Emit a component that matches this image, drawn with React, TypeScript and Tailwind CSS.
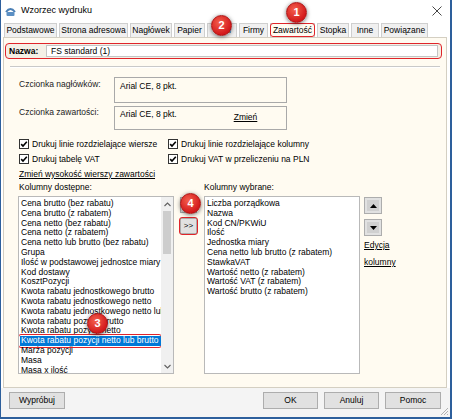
import React from "react";

const tabs: [string, number][] = [
  ["Podstawowe", 53],
  ["Strona adresowa", 69],
  ["Nagłówek", 42],
  ["Papier", 31],
  ["Tytuł", 30],
  ["Firmy", 29],
  ["Zawartość", 45],
  ["Stopka", 32],
  ["Inne", 28],
  ["Powiązane", 47],
];

const available = [
  "Cena brutto (bez rabatu)",
  "Cena brutto (z rabatem)",
  "Cena netto (bez rabatu)",
  "Cena netto (z rabatem)",
  "Cena netto lub brutto (bez rabatu)",
  "Grupa",
  "Ilość w podstawowej jednostce miary",
  "Kod dostawy",
  "KosztPozycji",
  "Kwota rabatu jednostkowego brutto",
  "Kwota rabatu jednostkowego netto",
  "Kwota rabatu jednostkowego netto lub brutto",
  "Kwota rabatu pozycji brutto",
  "Kwota rabatu pozycji netto",
  "Kwota rabatu pozycji netto lub brutto",
  "Marża pozycji",
  "Masa",
  "Masa x ilość",
];

const chosen = [
  "Liczba porządkowa",
  "Nazwa",
  "Kod CN/PKWiU",
  "Ilość",
  "Jednostka miary",
  "Cena netto lub brutto (z rabatem)",
  "StawkaVAT",
  "Wartość netto (z rabatem)",
  "Wartość VAT (z rabatem)",
  "Wartość brutto (z rabatem)",
];

function Badge({ n, className }: { n: number; className: string }) {
  return (
    <div
      className={
        "absolute w-[21px] h-[21px] rounded-full border border-[#a81212] bg-[radial-gradient(circle_at_40%_35%,#f4604e,#d3191b_70%)] shadow-[0_1px_4px_rgba(0,0,0,0.55)] flex items-center justify-center text-white font-bold text-[11px] leading-none " +
        className
      }
    >
      {n}
    </div>
  );
}

function Check() {
  return (
    <svg width="10" height="10" viewBox="0 0 10 10" className="shrink-0">
      <rect x="0.5" y="0.5" width="9" height="9" fill="#fff" stroke="#333" />
      <path d="M2.2 5.1 L4 7 L7.8 2.8" fill="none" stroke="#000" strokeWidth="1.6" />
    </svg>
  );
}

function Btn({ children, w, className = "" }: { children: React.ReactNode; w: string; className?: string }) {
  return (
    <div
      className={
        "h-[17px] bg-[#e1e1e1] border border-[#adadad] flex items-center justify-center text-[8.5px] " +
        w +
        " " +
        className
      }
    >
      {children}
    </div>
  );
}

export default function App() {
  return (
    <div className="relative w-[452px] h-[419px] overflow-hidden bg-white border-l border-r-[2px] border-b-[2px] border-[#2d5f9c] font-['Liberation_Sans',Arial,sans-serif] text-[8.5px] text-black flex flex-col">
      {/* title bar */}
      <div className="h-[22px] shrink-0 flex items-center pl-[4px] pr-[8px]">
        <svg width="11" height="11" viewBox="0 0 11 11">
          <path d="M1 6 Q5.5 0 10 6" fill="none" stroke="#4a7fb5" strokeWidth="2" />
          <rect x="1.5" y="6" width="8" height="4" rx="1" fill="#5b8fc4" />
        </svg>
        <span className="ml-[5px] text-[9px]">Wzorzec wydruku</span>
        <svg width="10" height="10" viewBox="0 0 10 10" className="ml-auto">
          <path d="M0.5 0.5 L9.5 9.5 M9.5 0.5 L0.5 9.5" stroke="#333" strokeWidth="0.9" />
        </svg>
      </div>

      {/* tabs */}
      <div className="h-[15px] shrink-0 flex items-end gap-[2px] pl-[3px]">
        {tabs.map(([t, w]) => (
          <div
            key={t}
            style={{ width: w }}
            className={
              "relative h-[14px] border border-b-0 border-[#cfcfcf] flex items-center justify-center whitespace-nowrap " +
              (t === "Zawartość" ? "bg-[#fffbf1]" : "bg-[#f0f0f0]")
            }
          >
            {t}
            {t === "Zawartość" && (
              <span className="absolute -inset-x-[1px] -top-[1px] bottom-[0px] rounded-[3px] border-[1.5px] border-[#e0242a]" />
            )}
          </div>
        ))}
      </div>

      {/* content panel */}
      <div className="ml-[2px] w-[444px] h-[351px] shrink-0 border border-[#d4cfc2] bg-[#fffbf1] flex flex-col">
        {/* Nazwa */}
        <div className="ml-[1px] mt-[5px] w-[437px] h-[16px] rounded-[4px] border-[1.5px] border-[#e0242a] bg-[#f4f0e6] flex items-center pl-[3px]">
          <span className="font-bold w-[37px]">Nazwa:</span>
          <div className="w-[392px] h-[12px] bg-white border border-[#c4c4c4] flex items-center pl-[4px]">
            FS standard (1)
          </div>
        </div>

        <div className="ml-[6px] mt-[7px] w-[430px] border-t border-[#c9c9c9] border-b border-b-white h-0" />

        {/* fonts */}
        <div className="mt-[9px] ml-[15px] flex">
          <span className="w-[95px] pt-[2px] leading-[10px] text-[#222]">Czcionka nagłówków:</span>
          <div className="w-[173px] h-[26px] border border-[#a9a9a9] pl-[5px] pt-[3px] leading-[10px]">
            Arial CE, 8 pkt.
          </div>
        </div>
        <div className="mt-[3px] ml-[15px] flex">
          <span className="w-[95px] pt-[1px] leading-[10px] text-[#222]">Czcionka zawartości:</span>
          <div className="w-[173px] h-[24px] border border-[#a9a9a9] pl-[5px] pt-[2px] leading-[10px] flex">
            <span>Arial CE, 8 pkt.</span>
            <span className="ml-[57px] mt-[3px] underline">Zmień</span>
          </div>
        </div>

        {/* checkboxes */}
        <div className="mt-[9px] ml-[15px] flex h-[10px] leading-[10px]">
          <div className="w-[149px] flex items-center gap-[3px]">
            <Check />
            <span>Drukuj linie rozdzielające wiersze</span>
          </div>
          <div className="flex items-center gap-[3px]">
            <Check />
            <span>Drukuj linie rozdzielające kolumny</span>
          </div>
        </div>
        <div className="mt-[5px] ml-[15px] flex h-[10px] leading-[10px]">
          <div className="w-[149px] flex items-center gap-[3px]">
            <Check />
            <span>Drukuj tabelę VAT</span>
          </div>
          <div className="flex items-center gap-[3px]">
            <Check />
            <span>Drukuj VAT w przeliczeniu na PLN</span>
          </div>
        </div>
        <div className="mt-[5px] ml-[15px] h-[10px] leading-[10px] underline">
          Zmień wysokość wierszy zawartości
        </div>

        {/* list labels */}
        <div className="mt-[3px] ml-[15px] flex h-[10px] leading-[10px]">
          <span className="w-[185px]">Kolumny dostępne:</span>
          <span>Kolumny wybrane:</span>
        </div>

        {/* lists */}
        <div className="mt-[4px] ml-[14px] flex">
          <div className="w-[156px] h-[178px] bg-white border border-[#b9b9b9] flex">
            <div className="flex-1 overflow-hidden pt-[2px] pl-[1px] leading-[9.8px] whitespace-nowrap">
              {available.map((a) => (
                <div
                  key={a}
                  className={
                    "relative pl-[1px] h-[9.8px] " + (a === "Kwota rabatu pozycji netto lub brutto" ? "bg-[#0078d7] text-white" : "")
                  }
                >
                  {a}
                  {a === "Kwota rabatu pozycji netto lub brutto" && (
                    <span className="absolute -left-[2px] -right-[1px] -top-[2px] -bottom-[2px] rounded-[3px] border-[1.5px] border-[#e0242a]" />
                  )}
                </div>
              ))}
            </div>
            <div className="w-[12px] bg-[#f0f0f0] flex flex-col">
              <div className="h-[14px] flex items-center justify-center">
                <svg width="7" height="5" viewBox="0 0 7 5">
                  <path d="M0.5 4 L3.5 1 L6.5 4" fill="none" stroke="#606060" strokeWidth="1.1" />
                </svg>
              </div>
              <div className="mx-[2px] h-[43px] bg-[#cdcdcd]" />
              <div className="mt-auto h-[13px] flex items-center justify-center">
                <svg width="7" height="5" viewBox="0 0 7 5">
                  <path d="M0.5 1 L3.5 4 L6.5 1" fill="none" stroke="#606060" strokeWidth="1.1" />
                </svg>
              </div>
            </div>
          </div>

          <div className="ml-[6px] mt-[1px] flex flex-col gap-[5px]">
            <div className="w-[17px] h-[16px] bg-[#e1e1e1] border border-[#adadad] flex items-center justify-center text-[8px]">
              &lt;&lt;
            </div>
            <div className="relative w-[17px] h-[16px] bg-[#e1e1e1] border border-[#adadad] flex items-center justify-center text-[8px]">
              &gt;&gt;
              <span className="absolute -inset-[2px] rounded-[3px] border-[1.5px] border-[#e0242a]" />
            </div>
          </div>

          <div className="ml-[7px] w-[156px] h-[178px] bg-white border border-[#b9b9b9] pt-[2px] pl-[2px] leading-[9.8px] whitespace-nowrap overflow-hidden">
            {chosen.map((c) => (
              <div key={c} className="h-[9.8px]">
                {c}
              </div>
            ))}
          </div>

          <div className="ml-[4px] mt-[1px] flex flex-col">
            <div className="w-[18px] h-[17px] bg-[#e1e1e1] border border-[#adadad] flex items-center justify-center">
              <div className="w-[12px] h-[11px] bg-[#d0d0d0] flex items-center justify-center">
                <svg width="7" height="4" viewBox="0 0 7 4">
                  <path d="M0 4 L3.5 0 L7 4 Z" fill="#000" />
                </svg>
              </div>
            </div>
            <div className="mt-[5px] w-[18px] h-[17px] bg-[#e1e1e1] border border-[#adadad] flex items-center justify-center">
              <div className="w-[12px] h-[11px] bg-[#d0d0d0] flex items-center justify-center">
                <svg width="7" height="4" viewBox="0 0 7 4">
                  <path d="M0 0 L7 0 L3.5 4 Z" fill="#000" />
                </svg>
              </div>
            </div>
            <span className="mt-[4px] leading-[10px] underline">Edycja</span>
            <span className="mt-[7px] leading-[10px] underline">kolumny</span>
          </div>
        </div>
      </div>

      {/* bottom bar */}
      <div className="flex-1 bg-[#f4f4f4] flex items-start pt-[4px] pl-[8px] pr-[9px] relative">
        <Btn w="w-[56px]">Wypróbuj</Btn>
        <Btn w="w-[55px]" className="ml-auto border-[#7f7f7f]">
          OK
        </Btn>
        <Btn w="w-[55px]" className="ml-[6px]">
          Anuluj
        </Btn>
        <Btn w="w-[56px]" className="ml-[6px]">
          Pomoc
        </Btn>
        <svg width="9" height="9" viewBox="0 0 9 9" className="absolute right-[1px] bottom-[1px]">
          <path d="M8 1 L1 8 M8 4 L4 8 M8 7 L7 8" stroke="#a0a0a0" strokeWidth="0.8" />
        </svg>
      </div>

      <Badge n={1} className="left-[285px] top-[2px]" />
      <Badge n={2} className="left-[210px] top-[15px]" />
      <Badge n={3} className="left-[86px] top-[313px]" />
      <Badge n={4} className="left-[179px] top-[193px]" />
    </div>
  );
}
